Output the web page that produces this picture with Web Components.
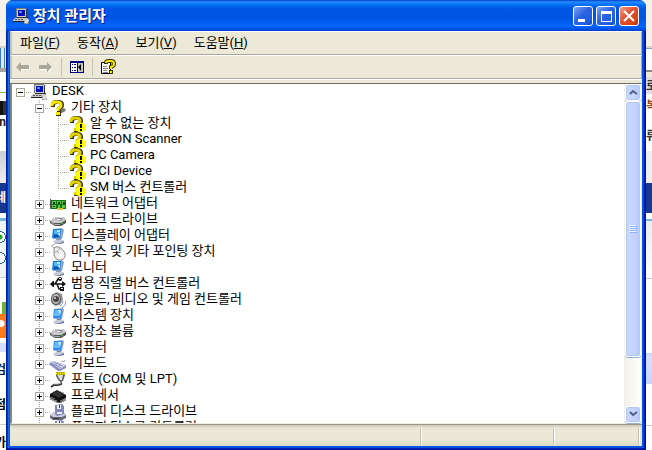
<!DOCTYPE html>
<html lang="ko">
<head>
<meta charset="UTF-8">
<meta name="viewport" content="width=device-width, initial-scale=1.0">
<title>장치 관리자</title>
<style>
    body {
        margin: 0;
        height: 100vh;
        overflow: hidden;
        display: grid;
        grid-template-columns: 6px minmax(0, 1fr) 6px;
        background: #f3f1ea;
        color: #000;
        font: 13px/16px Roboto, "Noto Sans CJK KR", sans-serif;
    }
</style>
</head>
<body>
    <page-edge side="left"></page-edge>

    <app-window>
        <title-bar slot="title">장치 관리자</title-bar>
        <menu-bar slot="menu"></menu-bar>
        <tool-bar slot="tools"></tool-bar>

        <tree-item icon="desk" open root>DESK
            <tree-item slot="children" icon="unknown" open>기타 장치
                <tree-item slot="children" icon="warning" leaf>알 수 없는 장치</tree-item>
                <tree-item slot="children" icon="warning" leaf>EPSON Scanner</tree-item>
                <tree-item slot="children" icon="warning" leaf>PC Camera</tree-item>
                <tree-item slot="children" icon="warning" leaf>PCI Device</tree-item>
                <tree-item slot="children" icon="warning" leaf>SM 버스 컨트롤러</tree-item>
            </tree-item>
            <tree-item slot="children" icon="network">네트워크 어댑터</tree-item>
            <tree-item slot="children" icon="disk">디스크 드라이브</tree-item>
            <tree-item slot="children" icon="display">디스플레이 어댑터</tree-item>
            <tree-item slot="children" icon="mouse">마우스 및 기타 포인팅 장치</tree-item>
            <tree-item slot="children" icon="display">모니터</tree-item>
            <tree-item slot="children" icon="usb">범용 직렬 버스 컨트롤러</tree-item>
            <tree-item slot="children" icon="sound">사운드, 비디오 및 게임 컨트롤러</tree-item>
            <tree-item slot="children" icon="computer">시스템 장치</tree-item>
            <tree-item slot="children" icon="disk">저장소 볼륨</tree-item>
            <tree-item slot="children" icon="computer">컴퓨터</tree-item>
            <tree-item slot="children" icon="keyboard">키보드</tree-item>
            <tree-item slot="children" icon="port">포트 (COM 및 LPT)</tree-item>
            <tree-item slot="children" icon="cpu">프로세서</tree-item>
            <tree-item slot="children" icon="floppy">플로피 디스크 드라이브</tree-item>
            <tree-item slot="children" icon="floppy">플로피 디스크 컨트롤러</tree-item>
        </tree-item>

        <scroll-bar slot="scroll"></scroll-bar>
        <status-bar slot="status"></status-bar>
    </app-window>

    <page-edge side="right"></page-edge>

<script>
    const ICONS = {
        desk: `
            <path d="M3 0h10v1h1v8H3z" fill="#d4d0c8"/>
            <path d="M13 1h1v9H4V9h9z" fill="#333"/>
            <path d="M3 0h10v1H4v8H3z" fill="#777"/>
            <path d="M5 2h7v6H5z" fill="#0010c0"/><path d="M6 3h3v2H6z" fill="#5090ff"/>
            <path d="M2 10h12v3H0v-1z" fill="#c6c6c6"/>
            <path d="M2 11h2v1H2zm3 0h2v1H5zm3 0h2v1H8z" fill="#555"/>
            <path d="M0 13h14v1H0zM14 9h1v4h-1z" fill="#222"/>
            <path d="M12 12l3-2 1 3-2 3-3-1z" fill="#ddd"/><path d="M11 15l4 1 1-3v3h-5z" fill="#777"/>`,
        unknown: `
            <path d="M9 11l5-3 2 2-2 2-5 2z" fill="#777"/>
            <path d="M3 7V5q0-3 4-3h1q4 0 4 3 0 2-3 4v3" fill="none" stroke="#333000" stroke-width="4"/>
            <path d="M6 12h5v4H6z" fill="#333000"/>
            <path d="M2 6V5q0-3 4-3h1q4 0 4 3 0 2-3 4v2" fill="none" stroke="#f8e800" stroke-width="3"/>
            <path d="M6 12h4v3H6z" fill="#f8e800"/>`,
        warning: `
            <path d="M3 7V5q0-3 4-3h1q4 0 4 3 0 2-3 4v3" fill="none" stroke="#333000" stroke-width="4"/>
            <path d="M5 12h4v4H5z" fill="#333000"/>
            <path d="M2 6V5q0-3 4-3h1q4 0 4 3 0 2-3 4v2" fill="none" stroke="#e0d000" stroke-width="3"/>
            <path d="M5 12h3v3H5z" fill="#e0d000"/>
            <path d="M9 7h5l2 2v5l-2 2H9l-2-2V9z" fill="#ff0"/>
            <path d="M11 8h2v4h-2zM11 13h2v2h-2z" fill="#000"/>`,
        network: `
            <path d="M0 3h1v10H0z" fill="#555"/><path d="M1 4h15v9H1z" fill="#087818"/>
            <path d="M2 5h4v3H2zm5 0h4v3H7zm5 0h3v3h-3zM2 9h4v3H2zm6 0h2v3H8zm4 0h3v3h-3z" fill="#69c33f"/>
            <path d="M3 6h2v2H3zm5 0h2v2H8zM3 10h2v1H3zm10-4h2v2h-2z" fill="#003c08"/>
            <path d="M7 12h6v2H7z" fill="#d9c438"/>`,
        disk: `
            <path d="M0 9l6-4h7l3 3v3l-5 3H5l-5-3z" fill="#555"/>
            <path d="M0 9l6-4h7l3 3-5 3H4z" fill="#ccc"/>
            <path d="M5 7l3-1h4l1 2-3 1z" fill="#999"/><path d="M7 7h3v1H7z" fill="#fff"/>
            <path d="M1 10l4 2h5v1H5l-4-2z" fill="#aaa"/><path d="M11 12l2-1v1z" fill="#5d5"/>`,
        display: `
            <path d="M3 1l9-1 2 2-2 9H3z" fill="#86a3cc"/><path d="M3 1l8 0-1 9H2z" fill="#167fd8"/>
            <path d="M4 2h6v4H4z" fill="#50b4ff"/><path d="M7 2h3v2H7z" fill="#b7edff"/>
            <path d="M4 7h4v2H4z" fill="#0050a4"/><path d="M8 6l2-1v3z" fill="#fff"/>
            <path d="M6 11h5l1 2H6z" fill="#8896aa"/><path d="M3 13l4-1h6l1 2-4 2H5z" fill="#c7cad8"/>
            <path d="M4 15l6 0 4-2v2l-4 1z" fill="#7080a0"/>`,
        computer: `
            <path d="M4 1l9-1 1 2-2 9H4z" fill="#8fa1c8"/><path d="M4 1l8 0-1 9H3z" fill="#268eea"/>
            <path d="M5 2h6l-1 6H4z" fill="#68baff"/><path d="M8 2h3l-1 5z" fill="#c6edff"/>
            <path d="M7 11h4l1 2H6z" fill="#7784a4"/><path d="M3 13l4-1h6l1 2-4 2H5z" fill="#c7cad8"/>
            <path d="M4 15h6l4-2v2l-4 1z" fill="#6675a0"/>`,
        mouse: `
            <path d="M5 4C1 3 1 0 5 0" fill="none" stroke="#999"/>
            <path d="M4 4q4-3 8 1l3 4q1 5-3 7H8q-3-1-4-5z" fill="#eee" stroke="#888"/>
            <path d="M4 8q4 1 6-5M7 7l2 2" fill="none" stroke="#aaa"/>
            <path d="M8 10q4 1 5-2l1 4-4 3z" fill="#fff"/>`,
        usb: `
            <path d="M2 8h11M5 8l3-5h3M7 8l2 5h2" fill="none" stroke="#111" stroke-width="1.5"/>
            <path d="M0 8l3-3h1v6H3zM12 5l4 3-4 3z" fill="#111"/>
            <circle cx="10" cy="3" r="2" fill="#111"/><path d="M10 11h4v4h-4z" fill="#111"/>
            <path d="M9 2h2v1H9zM11 12h2v1h-2z" fill="#eee"/>`,
        sound: `
            <path d="M2 3l5-3 5 2 1 6-3 5-5 1-4-4z" fill="#999"/>
            <ellipse cx="6" cy="7" rx="5" ry="6" fill="#555"/><ellipse cx="6" cy="7" rx="4" ry="5" fill="#bbb"/>
            <circle cx="6" cy="7" r="3" fill="#444"/><circle cx="5" cy="6" r="1" fill="#ddd"/>
            <path d="M10 14q3-2 3-5M12 16q4-2 4-7" fill="none" stroke="#8495e6"/>`,
        keyboard: `
            <path d="M0 6l3-1 13 4v3l-6 3H8L0 9z" fill="#8790bd"/>
            <path d="M0 6l3-1 13 4-6 4z" fill="#d9dcf4"/>
            <path d="M2 7l9 5M4 6l9 4M5 9l3-2M8 11l3-3" fill="none" stroke="#8a91bd"/>
            <path d="M11 5l3 1 1-2" fill="none" stroke="#aaa"/>`,
        port: `
            <path d="M6 1h9v2l-2 6h-4L6 4z" fill="#555"/><path d="M7 3h6l-1 5h-2z" fill="#ddd"/>
            <path d="M6 0h9v3H6z" fill="#b5a800"/><path d="M6 1h1v1H6zm2 0h1v1H8zm2 0h1v1h-1zm2 0h1v1h-1zm2 0h1v1h-1z" fill="#ff0"/>
            <path d="M11 9v3l-3 1H4l-3 2" fill="none" stroke="#333" stroke-width="2"/>
            <path d="M11 9v2l-3 1H4" fill="none" stroke="#bbb"/>`,
        cpu: `
            <path d="M0 6l7-4 9 5v3l-7 5-9-6z" fill="#111"/>
            <path d="M2 6l5-3 7 4-5 3z" fill="#333"/>
            <path d="M1 9v3m2-2v3m2-2v3m2-2v3m4-2v2m2-3v2m2-4v3" stroke="#222"/>
            <path d="M2 9v1m2 0v1m2 1v1m5-1v1m2-2v1m2-2v1" stroke="#bbb"/>
            <path d="M4 3v1m6-1v1m3 0v1" stroke="#777"/>`,
        floppy: `
            <path d="M0 11l4-3h9l3 3v3l-4 2H3l-3-2z" fill="#667"/>
            <path d="M0 11l4-3h9l3 3-4 2H3z" fill="#ccd"/>
            <path d="M5 1l7-1 2 2v8l-7 2-2-2z" fill="#8188b4"/>
            <path d="M7 1h4v4H7zM7 8h5v2H7z" fill="#eef"/><path d="M9 1h1v3H9z" fill="#336"/>
            <path d="M3 14h6v1H3z" fill="#333"/>`,
        back: `<path d="M2 9l5-5v3h8v4H7v3z" fill="#fff"/><path d="M1 8l5-5v3h8v4H6v3z" fill="#aca899"/>`,
        forward: `<path d="M15 9l-5-5v3H2v4h8v3z" fill="#fff"/><path d="M14 8L9 3v3H1v4h8v3z" fill="#aca899"/>`,
        panel: `
            <path d="M1 2h14v12H1z" fill="#000080"/><path d="M2 4h6v9H2z" fill="#fff"/>
            <path d="M9 4h5v9H9z" fill="#c8c8c8"/>
            <path d="M3 5h1v1H3zm2 0h2v1H5zM3 8h1v1H3zm2 0h2v1H5zm-2 3h1v1H3zm2 0h2v1H5z" fill="#000080"/>
            <path d="M12 5v7L9 8z" fill="#000"/>`,
        help: `
            <path d="M1.500 3.500h9v11h-9z" fill="#fff" stroke="#000"/>
            <path d="M3 7h4v1H3zm0 2h5v1H3zm0 2h4v1H3zm0 2h5v1H3z" fill="#808080"/>
            <path d="M6 5V4q0-2 3-2h2q3 0 3 3 0 2-3 3v2" fill="none" stroke="#333000" stroke-width="4"/>
            <path d="M9 11h4v4H9z" fill="#333000"/>
            <path d="M6 4q0-2 3-2h2q3 0 3 3 0 2-3 3v2" fill="none" stroke="#ffea00" stroke-width="2"/>
            <path d="M10 12h2v2h-2z" fill="#ffea00"/>`
    };

    const svg = (name) => `<svg width="16" height="16" viewBox="0 0 16 16" aria-hidden="true">${ICONS[name]}</svg>`;

    /** Frame with slots for every bar and the tree */
    class AppWindow extends HTMLElement {
        connectedCallback() {
            this.attachShadow({ mode: 'open' }).innerHTML = `
                <style>
                    :host {
                        display: flex;
                        flex-direction: column;
                        box-sizing: border-box;
                        height: 100vh;
                        min-width: 0;
                        padding: 0 4px 4px;
                        border-radius: 7px 7px 0 0;
                        background: linear-gradient(90deg, #001ea0 1px, #0831d9 1px 2px, #166aee 2px 3px, #0855dd 3px calc(100% - 3px), #0048f0 calc(100% - 3px) calc(100% - 2px), #001dc0 calc(100% - 2px) calc(100% - 1px), #00138c 0);
                        box-shadow: inset 0 -1px #00138c, inset 0 -2px #001dc0;
                        overflow: hidden;
                    }
                    .frame {
                        flex: 1;
                        min-height: 0;
                        display: flex;
                        padding-top: 4px;
                        background: linear-gradient(#fff 1px, #ece9d8 1px);
                    }
                    main {
                        flex: 1;
                        min-width: 0;
                        display: flex;
                        border: solid;
                        border-width: 1px 1px 1px 2px;
                        border-color: #716f64 #f1efe2 #f1efe2 #8a8778;
                        background: #fff;
                    }
                    .tree { flex: 1; min-width: 0; overflow: hidden; }
                </style>
                <slot name="title"></slot>
                <slot name="menu"></slot>
                <slot name="tools"></slot>
                <div class="frame">
                    <main>
                        <div class="tree" role="tree"><slot></slot></div>
                        <slot name="scroll"></slot>
                    </main>
                </div>
                <slot name="status"></slot>
            `;
        }
    }

    class TitleBar extends HTMLElement {
        connectedCallback() {
            this.attachShadow({ mode: 'open' }).innerHTML = `
                <style>
                    :host {
                        display: flex;
                        align-items: center;
                        gap: 3px;
                        height: 31px;
                        box-sizing: border-box;
                        margin: 0 -4px;
                        padding: 1px 7px 0 7px;
                        background: linear-gradient(#0040c8, #2a8cff 2px, #0878f8 4px, #0058e6 8px, #0054e3 18px, #0066ff 26px, #005bf0 28px, #003dcc);
                    }
                    h1 {
                        flex: 1;
                        margin: 0 0 0 1px;
                        color: #fff;
                        font-size: 15px;
                        line-height: 20px;
                        font-weight: 700;
                        text-shadow: 1px 1px #0a1883;
                    }
                    button {
                        width: 20px;
                        height: 20px;
                        padding: 0;
                        border: 1px solid #fff;
                        border-radius: 3px;
                        background: linear-gradient(135deg, #7aa5f4, #2c62e0 45%, #2060e8 75%, #134bc0);
                    }
                    .close { background: linear-gradient(135deg, #f0a088, #e0502c 45%, #dc4818 75%, #b03010); }
                    svg { display: block; }
                    button svg { margin: auto; }
                </style>
                ${svg('desk')}
                <h1><slot></slot></h1>
                <button aria-label="최소화"><svg width="18" height="18"><path d="M4 12h7v3H4z" fill="#fff"/></svg></button>
                <button aria-label="최대화"><svg width="18" height="18"><path d="M4 4h11v11H4zm1 3v7h9V7z" fill="#fff" fill-rule="evenodd"/></svg></button>
                <button class="close" aria-label="닫기"><svg width="18" height="18"><path d="M4 4l10 10M14 4L4 14" stroke="#fff" stroke-width="2"/></svg></button>
            `;
        }
    }

    class MenuBar extends HTMLElement {
        connectedCallback() {
            const items = [['파일', 'F'], ['동작', 'A'], ['보기', 'V'], ['도움말', 'H']];
            this.attachShadow({ mode: 'open' }).innerHTML = `
                <style>
                    :host {
                        display: flex;
                        align-items: center;
                        gap: 17px;
                        height: 24px;
                        box-sizing: border-box;
                        padding: 0 8px;
                        background: #ece9d8;
                        border: solid;
                        border-width: 1px 1px 1px 2px;
                        border-color: #fff #aca899 #aca899 #c5c2b3;
                    }
                    button { padding: 0; border: 0; background: none; color: inherit; font: inherit; }
                </style>
                ${items.map(([text, key]) => `<button>${text}(<u>${key}</u>)</button>`).join('')}
            `;
        }
    }

    class ToolBar extends HTMLElement {
        connectedCallback() {
            this.attachShadow({ mode: 'open' }).innerHTML = `
                <style>
                    :host {
                        display: flex;
                        align-items: center;
                        gap: 7px;
                        height: 24px;
                        box-sizing: border-box;
                        padding: 0 3px;
                        background: #ece9d8;
                        border: solid;
                        border-width: 1px 1px 1px 2px;
                        border-color: #fff #aca899 #aca899 #c5c2b3;
                    }
                    button { padding: 0; border: 0; background: none; }
                    svg { display: block; }
                    hr { width: 1px; height: 18px; margin: 0; border: 0; background: #c5c2b3; }
                </style>
                <button aria-label="뒤로" disabled>${svg('back')}</button>
                <button aria-label="앞으로" disabled>${svg('forward')}</button>
                <hr>
                <button aria-label="콘솔 트리 표시">${svg('panel')}</button>
                <hr>
                <button aria-label="도움말">${svg('help')}</button>
            `;
        }
    }

    /** One tree node. Attributes: icon, open, leaf, root */
    class TreeItem extends HTMLElement {
        connectedCallback() {
            this.attachShadow({ mode: 'open' });
            this.setAttribute('role', 'treeitem');
            this.render();
        }

        render() {
            const open = this.hasAttribute('open');
            const expander = this.hasAttribute('leaf') ? '' : `
                <button aria-label="${open ? '축소' : '확장'}">
                    <svg width="7" height="7"><path d="M1 3h5v1H1z${open ? '' : 'M3 1h1v5H3z'}"/></svg>
                </button>`;
            this.shadowRoot.innerHTML = `
                <style>
                    :host {
                        display: block;
                        background: repeating-linear-gradient(#aca899 0 1px, transparent 1px 2px) 8px 0 / 1px 100% no-repeat;
                    }
                    :host([root]) { background: none; }
                    :host([leaf]:last-child) { background-size: 1px 8px; }
                    .row { display: flex; height: 16px; white-space: nowrap; }
                    .lead {
                        display: flex;
                        align-items: center;
                        width: 19px;
                        box-sizing: border-box;
                        padding-left: 4px;
                        background: repeating-linear-gradient(90deg, #aca899 0 1px, transparent 1px 2px) 8px 8px / 11px 1px no-repeat;
                    }
                    button {
                        width: 9px;
                        height: 9px;
                        padding: 0;
                        border: 1px solid #aca899;
                        background: #fff;
                    }
                    svg { display: block; flex: none; }
                    .label { margin-left: 5px; line-height: 14px; }
                    .children { padding-left: 19px; }
                </style>
                <div class="row">
                    <span class="lead">${expander}</span>
                    ${svg(this.getAttribute('icon'))}
                    <span class="label"><slot></slot></span>
                </div>
                ${open ? '<div class="children" role="group"><slot name="children"></slot></div>' : ''}
            `;
        }
    }

    class ScrollBar extends HTMLElement {
        connectedCallback() {
            this.attachShadow({ mode: 'open' }).innerHTML = `
                <style>
                    :host {
                        display: flex;
                        flex-direction: column;
                        width: 17px;
                        background: linear-gradient(90deg, #eeede5, #f3f1ec 1px, #fefefb);
                    }
                    button, .thumb {
                        box-sizing: border-box;
                        padding: 0;
                        margin: 0 0 0 1px;
                        border: 1px solid #fff;
                        border-radius: 3px;
                        background: linear-gradient(90deg, #c9d7fc, #c4d4fd 60%, #b0c8f8);
                        box-shadow: inset 0 0 0 1px #b5c7f0, 0 1px #8eaede;
                    }
                    button { height: 17px; flex: none; }
                    svg { display: block; margin: auto; }
                    .track { flex: 1; min-height: 0; }
                    .thumb { display: flex; align-items: center; height: 84%; }
                </style>
                <button aria-label="위로"><svg width="9" height="7"><path d="M1 5l3-3 4 3" fill="none" stroke="#4d6185" stroke-width="2"/></svg></button>
                <div class="track">
                    <div class="thumb">
                        <svg width="8" height="8"><path d="M0 0h7v1H0zm0 2h7v1H0zm0 2h7v1H0zm0 2h7v1H0z" fill="#eef4fe"/><path d="M1 1h7v1H1zm0 2h7v1H1zm0 2h7v1H1zm0 2h7v1H1z" fill="#8cb0f8"/></svg>
                    </div>
                </div>
                <button aria-label="아래로"><svg width="9" height="7"><path d="M1 1l3 3 4-3" fill="none" stroke="#4d6185" stroke-width="2"/></svg></button>
            `;
        }
    }

    class StatusBar extends HTMLElement {
        connectedCallback() {
            this.attachShadow({ mode: 'open' }).innerHTML = `
                <style>
                    :host {
                        display: grid;
                        grid-template-columns: minmax(0, 1fr) 133px 85px;
                        height: 22px;
                        box-sizing: border-box;
                        padding: 3px 2px 1px 0;
                        border-top: 1px solid #9d9a8c;
                        background: linear-gradient(#c9c6b5, #e2dfcf 2px, #ece9d8 5px, #eae7d6 15px, #dedbc8);
                    }
                    span { border-right: 1px solid #fff; box-shadow: inset -1px 0 #c5c2b3; }
                </style>
                <span></span><span></span><span></span>
            `;
        }
    }

    /** Sliver of the web page that shows beside the window: [height, background, text, colour] */
    const EDGES = {
        left: [
            [46, '#f4f2ea'], [2, '#d8d5c8'],
            [20, 'linear-gradient(90deg, #4078c0 1px, #d8ecff 1px 4px, #4078c0 4px 5px, #eee 5px)'],
            [4, '#a5a498'], [20, '#fff'], [1, '#80c840'], [8, '#fff'],
            [14, 'linear-gradient(90deg, #111 3px, #333 3px)'], [14, '#fff', 'an', '#222'], [22, '#fff'],
            [32, 'linear-gradient(#ccccd4, #ededf2)'], [30, '#16388f', '네', '#fff'], [5, '#fff'], [3, '#72b4e0'],
            [9, '#eff4f5'],
            [14, 'radial-gradient(circle at 0 50%, #20a820 2px, #fff 3px 5px, #286090 5px 6px, #eff4f5 6px)'], [7, '#eff4f5'],
            [14, 'radial-gradient(circle at 0 50%, #fff 5px, #286090 5px 6px, #eff4f5 6px)'], [12, '#eff4f5'],
            [1, '#ccc'], [24, '#fff'], [12, 'linear-gradient(90deg, #fff 2px, #70b030 2px)'],
            [24, 'radial-gradient(circle at 1px 40%, #fff 3px, #ff7a18 4px)'],
            [5, '#fff'], [9, '#d5dcff'], [8, '#fff'], [20, '#fff', '검', '#124'], [15, '#fff'],
            [20, '#fff', '점', '#000'], [9, '#fff'], [1, '#ccc'], [10, '#fff'], [15, '#fff', '가', '#000']
        ],
        right: [
            [46, '#f3f1e8'], [2, '#d8d5c8'], [1, '#7ca4cc'], [21, '#fff'], [2, '#8a8980'], [5, '#ece9d8'],
            [17, '#ddd', '로', '#333'], [4, '#fff'], [16, '#fff', '복', '#964818'], [14, '#fff'],
            [16, '#fff', '류', '#333'], [7, '#fff'], [32, '#efefef'], [30, '#16388f'], [6, '#fff'], [2, '#72b4e0'],
            [57, 'linear-gradient(#e8edef, #fff)'], [1, '#ccc'], [74, '#fff'],
            [31, 'linear-gradient(#c8d0ff, #d8e0ff 3px, #c8d4ff)'], [41, '#fff'], [1, '#ccc'], [26, '#fff']
        ]
    };

    class PageEdge extends HTMLElement {
        connectedCallback() {
            const bands = EDGES[this.getAttribute('side')];
            this.attachShadow({ mode: 'open' }).innerHTML = `
                <style>
                    :host { display: flex; flex-direction: column; overflow: hidden; background: #fff; }
                    div { display: flex; flex: none; align-items: center; overflow: hidden; font-size: 12px; font-weight: 700; }
                    :host([side="left"]) div { justify-content: flex-end; }
                </style>
                ${bands.map(([height, fill, text = '', color = '#000']) => `
                    <div style="height: ${height}px; background: ${fill}; color: ${color}">${text}</div>
                `).join('')}
            `;
        }
    }

    customElements.define('app-window', AppWindow);
    customElements.define('title-bar', TitleBar);
    customElements.define('menu-bar', MenuBar);
    customElements.define('tool-bar', ToolBar);
    customElements.define('tree-item', TreeItem);
    customElements.define('scroll-bar', ScrollBar);
    customElements.define('status-bar', StatusBar);
    customElements.define('page-edge', PageEdge);
</script>
</body>
</html>
